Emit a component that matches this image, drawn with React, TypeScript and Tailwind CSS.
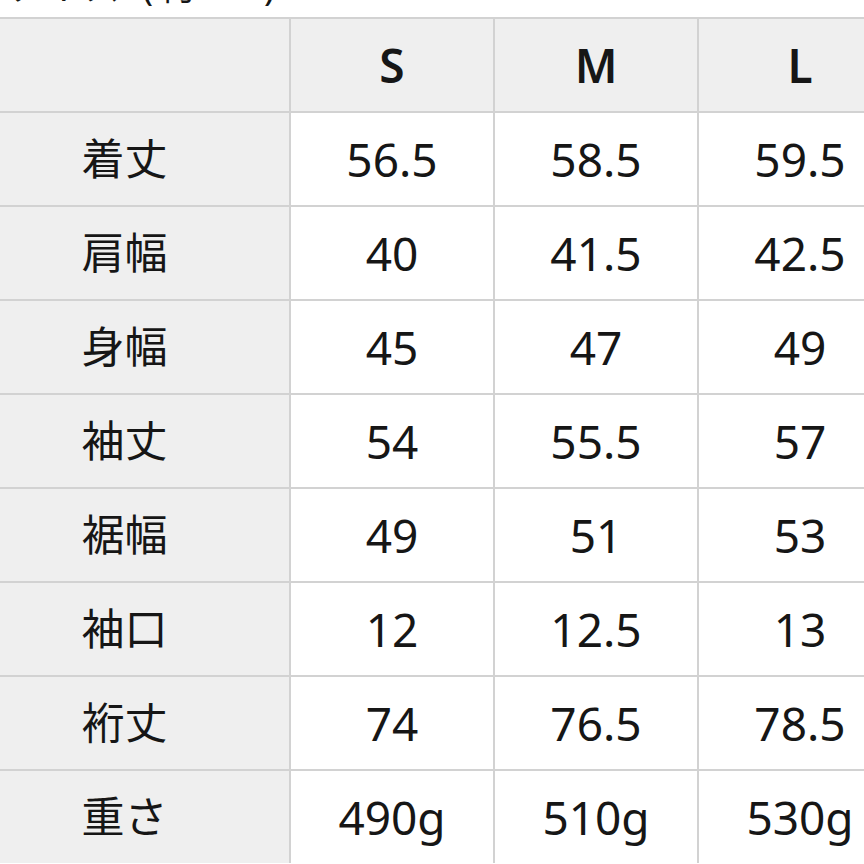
const header = ["S", "M", "L"]

const rows: [string, string, string, string][] = [
  ["着丈", "56.5", "58.5", "59.5"],
  ["肩幅", "40", "41.5", "42.5"],
  ["身幅", "45", "47", "49"],
  ["袖丈", "54", "55.5", "57"],
  ["裾幅", "49", "51", "53"],
  ["袖口", "12", "12.5", "13"],
  ["裄丈", "74", "76.5", "78.5"],
  ["重さ", "490g", "510g", "530g"],
]

export default function App() {
  return (
    <div
      className="w-[864px] h-[864px] overflow-hidden bg-white text-[#161616]"
      style={{ fontFamily: '"Noto Sans", "Noto Sans CJK JP", sans-serif' }}
    >
      <div className="h-[17px] overflow-hidden pl-[2px]">
        <p className="text-[36px] leading-none mt-[-31px] tracking-[6px] whitespace-nowrap">
          サイズ (約cm)
        </p>
      </div>
      <div className="ml-[-40px] w-[944px] grid grid-cols-[329px_202px_202px_202px] auto-rows-[92px] gap-[2px] pt-[2px] bg-[#d2d2d2]">
        <div className="bg-[#efefef]" />
        {header.map((h) => (
          <div
            key={h}
            className="bg-[#efefef] flex items-center justify-center text-[46px] font-semibold"
          >
            {h}
          </div>
        ))}
        {rows.map(([label, s, m, l]) => (
          <div key={label} className="contents">
            <div className="bg-[#efefef] flex items-center justify-center text-[43px]">
              {label}
            </div>
            {[s, m, l].map((v, i) => (
              <div
                key={i}
                className="bg-white flex items-center justify-center text-[46px]"
              >
                {v}
              </div>
            ))}
          </div>
        ))}
      </div>
    </div>
  )
}
